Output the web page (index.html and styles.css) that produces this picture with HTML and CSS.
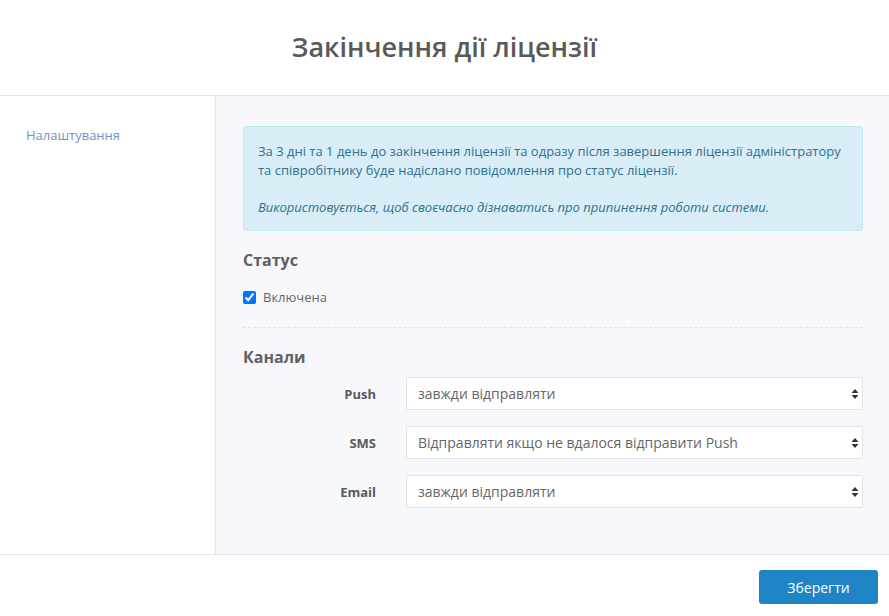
FILE: index.html
```html
<!DOCTYPE html>
<html lang="uk">
<head>
<meta charset="utf-8">
<title>Закінчення дії ліцензії</title>
<link rel="stylesheet" href="styles.css">
</head>
<body>
<div class="page">
  <header class="header">
    <h1 class="title">Закінчення дії ліцензії</h1>
  </header>
  <div class="body">
    <aside class="sidebar">
      <a class="side-link" href="#">Налаштування</a>
    </aside>
    <main class="main">
      <div class="alert">
        <p class="alert-text">За 3 дні та 1 день до закінчення ліцензії та одразу після завершення ліцензії адміністратору та співробітнику буде надіслано повідомлення про статус ліцензії.</p>
        <p class="alert-text alert-em">Використовується, щоб своєчасно дізнаватись про припинення роботи системи.</p>
      </div>
      <h2 class="section-title">Статус</h2>
      <label class="check">
        <input type="checkbox" checked class="check-input">
        <span>Включена</span>
      </label>
      <hr class="divider">
      <h2 class="section-title">Канали</h2>
      <div class="rows">
        <div class="row">
          <span class="row-label">Push</span>
          <div class="select-wrap">
            <select class="select"><option>завжди відправляти</option></select>
            <svg class="select-arrow" width="8" height="12" viewBox="0 0 8 12"><path d="M4 1 L7.5 5 H0.5 Z M4 11 L7.5 7 H0.5 Z" fill="#333"/></svg>
          </div>
        </div>
        <div class="row">
          <span class="row-label">SMS</span>
          <div class="select-wrap">
            <select class="select"><option>Відправляти якщо не вдалося відправити Push</option></select>
            <svg class="select-arrow" width="8" height="12" viewBox="0 0 8 12"><path d="M4 1 L7.5 5 H0.5 Z M4 11 L7.5 7 H0.5 Z" fill="#333"/></svg>
          </div>
        </div>
        <div class="row">
          <span class="row-label">Email</span>
          <div class="select-wrap">
            <select class="select"><option>завжди відправляти</option></select>
            <svg class="select-arrow" width="8" height="12" viewBox="0 0 8 12"><path d="M4 1 L7.5 5 H0.5 Z M4 11 L7.5 7 H0.5 Z" fill="#333"/></svg>
          </div>
        </div>
      </div>
    </main>
  </div>
  <footer class="footer">
    <button class="btn" type="button">Зберегти</button>
  </footer>
</div>
</body>
</html>
```
FILE: styles.css
```css
* { box-sizing: border-box; }
html, body { margin: 0; padding: 0; }
body {
  font-family: "Open Sans", "Noto Sans", sans-serif;
  font-size: 13px;
  color: #555;
  background: #fff;
}
.page {
  width: 889px;
  height: 616px;
  display: flex;
  flex-direction: column;
}
.header {
  height: 96px;
  border-bottom: 1px solid #e3e3e3;
  display: flex;
  align-items: center;
  justify-content: center;
}
.title {
  margin: 0 0 2px;
  font-size: 27px;
  font-weight: 600;
  color: #595959;
}
.body {
  display: flex;
  height: 458px;
}
.sidebar {
  width: 216px;
  border-right: 1px solid #e3e3e3;
  padding: 30px 0 0 26px;
}
.side-link {
  color: #7391cd;
  text-decoration: none;
  font-size: 13px;
  line-height: 19px;
}
.main {
  flex: 1;
  background: #f7f8fc;
  padding: 30px 26px 0 27px;
}
.alert {
  background: #d9edf7;
  border: 1px solid #bce8f1;
  border-radius: 4px;
  padding: 15px 15px 13px 14px;
  color: #31708f;
  height: 105px;
}
.alert-text {
  margin: 0;
  line-height: 19px;
}
.alert-em {
  font-style: italic;
  margin-top: 18px;
}
.section-title {
  margin: 17px 0 0;
  font-size: 16px;
  font-weight: 700;
  line-height: 24px;
  color: #616161;
}
.check {
  display: flex;
  align-items: center;
  gap: 7px;
  margin-top: 16px;
  line-height: 19px;
  color: #666;
}
.check-input {
  margin: 0;
  width: 13px;
  height: 13px;
}
.divider {
  margin: 20px 0 0;
  border: 0;
  border-top: 1px dashed #e3e3e3;
}
.divider + .section-title { margin-top: 17px; }
.rows {
  display: flex;
  flex-direction: column;
  gap: 16px;
  margin-top: 8px;
}
.row {
  display: flex;
  align-items: center;
}
.row-label {
  width: 133px;
  text-align: right;
  font-weight: 700;
  color: #595959;
  margin-right: 30px;
}
.select-wrap {
  position: relative;
  flex: 1;
}
.select {
  appearance: none;
  -webkit-appearance: none;
  width: 100%;
  height: 33px;
  border: 1px solid #e3e3e3;
  border-radius: 2px;
  background: #fff;
  font-family: "Open Sans", "Noto Sans", sans-serif;
  font-size: 14px;
  color: #666;
  padding: 0 30px 0 11px;
}
.select-arrow {
  position: absolute;
  right: 4px;
  top: 11px;
}
.footer {
  flex: 1;
  border-top: 1px solid #e3e3e3;
  display: flex;
  justify-content: flex-end;
  align-items: flex-start;
  padding: 15px 11px 0 0;
}
.btn {
  width: 119px;
  height: 34px;
  background: #1f84c6;
  border: 0;
  border-radius: 3px;
  color: #fff;
  font-family: "Open Sans", "Noto Sans", sans-serif;
  font-size: 14px;
  font-weight: 500;
}
```
